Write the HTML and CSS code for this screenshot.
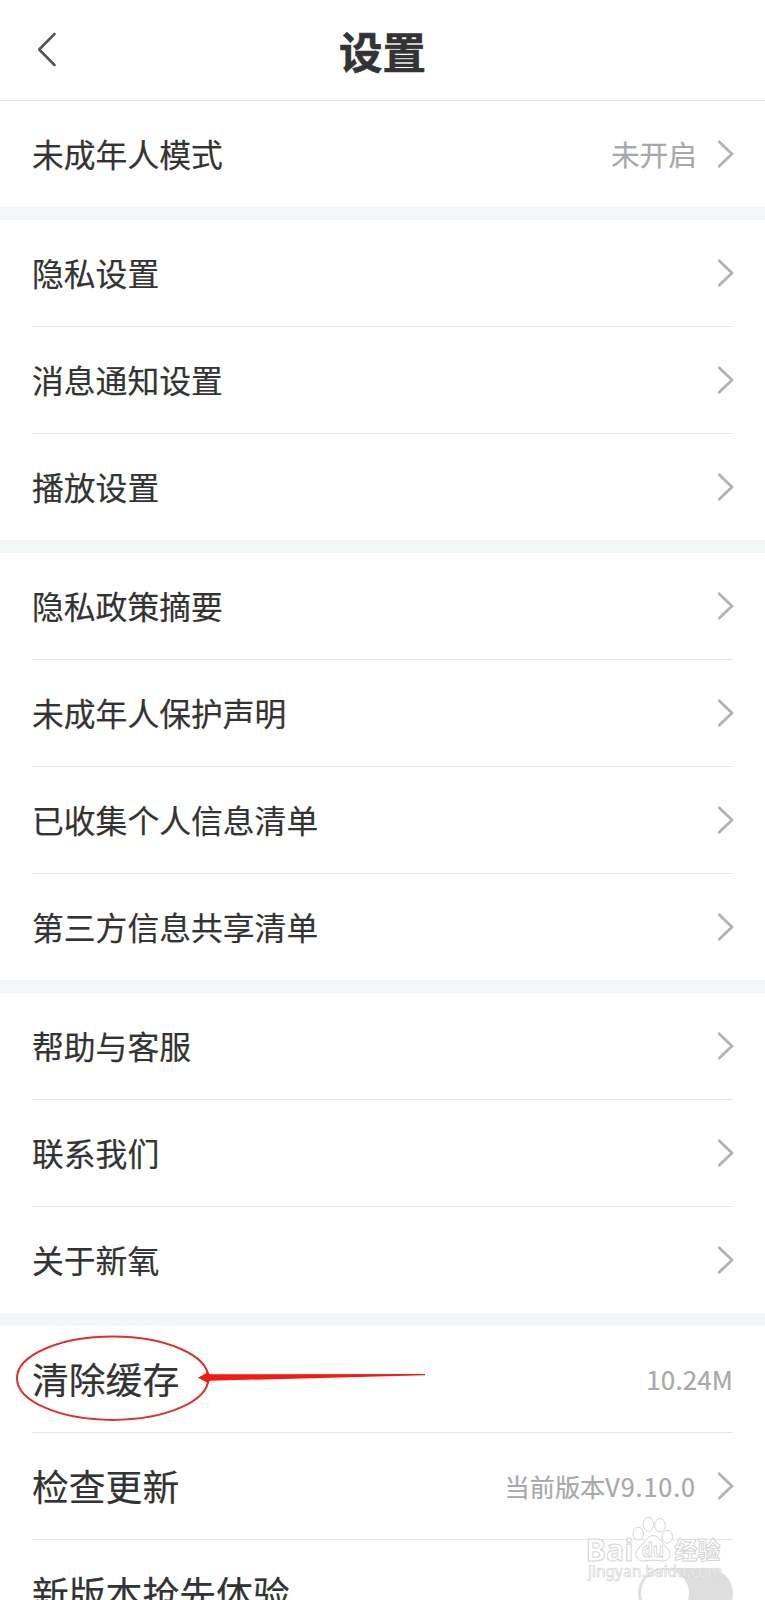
FILE: index.html
```html
<!DOCTYPE html>
<html lang="zh-CN">
<head>
<meta charset="utf-8">
<title>设置</title>
<link rel="stylesheet" href="styles.css">
</head>
<body>
<svg class="defs" width="0" height="0"><symbol id="chev" viewBox="0 0 18 30"><path d="M3.200 2.700 L16 15 L3.200 27.300"/></symbol></svg>
<main class="screen">
  <header class="header">
    <svg class="back" viewBox="0 0 20 36"><path d="M17.5 2 L2.2 17.5 L17.5 33"/></svg>
    <h1 class="title">设置</h1>
  </header>
  <section class="group">
    <div class="row"><span class="label">未成年人模式</span><span class="value">未开启</span><svg class="chev"><use href="#chev"/></svg></div>
  </section>
  <section class="group">
    <div class="row"><span class="label">隐私设置</span><svg class="chev"><use href="#chev"/></svg></div>
    <div class="row"><span class="label">消息通知设置</span><svg class="chev"><use href="#chev"/></svg></div>
    <div class="row"><span class="label">播放设置</span><svg class="chev"><use href="#chev"/></svg></div>
  </section>
  <section class="group">
    <div class="row"><span class="label">隐私政策摘要</span><svg class="chev"><use href="#chev"/></svg></div>
    <div class="row"><span class="label">未成年人保护声明</span><svg class="chev"><use href="#chev"/></svg></div>
    <div class="row"><span class="label">已收集个人信息清单</span><svg class="chev"><use href="#chev"/></svg></div>
    <div class="row"><span class="label">第三方信息共享清单</span><svg class="chev"><use href="#chev"/></svg></div>
  </section>
  <section class="group">
    <div class="row"><span class="label">帮助与客服</span><svg class="chev"><use href="#chev"/></svg></div>
    <div class="row"><span class="label">联系我们</span><svg class="chev"><use href="#chev"/></svg></div>
    <div class="row"><span class="label">关于新氧</span><svg class="chev"><use href="#chev"/></svg></div>
  </section>
  <section class="group large">
    <div class="row"><span class="label">清除缓存</span><span class="value size">10.24M</span></div>
    <div class="row"><span class="label">检查更新</span><span class="value version">当前版本<span class="num">V9.10.0</span></span><svg class="chev"><use href="#chev"/></svg></div>
    <div class="row"><span class="label">新版本抢先体验</span><span class="switch"></span></div>
  </section>
  <svg class="callout" viewBox="0 0 430 90">
    <ellipse cx="112.7" cy="43.2" rx="95.7" ry="41.7"/>
    <path d="M198 42.7 L208 37 L210 39.300 L425 39 L425 40.300 L210 45.8 L208 48 Z"/>
  </svg>
  <svg class="watermark" viewBox="0 0 155 74">
    <text class="brand" x="14.500" y="50.500" textLength="48" lengthAdjust="spacingAndGlyphs">Bai</text>
    <ellipse cx="67.3" cy="23.7" rx="5.2" ry="6.5"/>
    <ellipse cx="77.3" cy="14.3" rx="5.2" ry="7"/>
    <ellipse cx="89" cy="15.3" rx="5.3" ry="6.7"/>
    <ellipse cx="96.300" cy="26.700" rx="5.200" ry="6.500"/>
    <path d="M82 25.500 C75 26 73 34 68 38 C62 43 65 51.500 73 51 C79 50 85 50 91 51 C99 51.500 102 43 96 38 C91 34 89 26 82 25.500 Z"/>
    <text class="du" x="71" y="46.500" textLength="22" lengthAdjust="spacingAndGlyphs">du</text>
    <text class="exp" x="103.500" y="48.500" textLength="46" lengthAdjust="spacingAndGlyphs">经验</text>
    <text class="url" x="17" y="66.500" textLength="134" lengthAdjust="spacingAndGlyphs">jingyan.baidu.com</text>
  </svg>
</main>
</body>
</html>
```
FILE: styles.css
```css
* { box-sizing: border-box; }
body { margin: 0; background: #fff; overflow: hidden; }
.defs { position: absolute; }
.screen {
  position: relative;
  width: 765px;
  height: 1600px;
  overflow: hidden;
  background: #f3f6f7;
  color: #333;
  font-family: "Noto Sans CJK SC", sans-serif;
}
.header {
  display: grid;
  grid-template-columns: 100px 1fr 100px;
  align-items: center;
  height: 101px;
  background: #fff;
  border-bottom: 1px solid #e2e3e5;
}
.back { width: 20px; height: 36px; margin-left: 37px; fill: none; stroke: #555; stroke-width: 2.6; stroke-linecap: round; stroke-linejoin: round; }
.title { margin: 0; padding-top: 1px; text-align: center; font-size: 43.500px; line-height: 60px; font-weight: 700; -webkit-text-stroke: 0.6px #333; }
.group { padding: 0 32px; background: #fff; margin-bottom: 13px; }
.row {
  display: flex;
  align-items: center;
  height: 107px;
  border-bottom: 1px solid #e5e6e8;
}
.row:last-child { height: 106px; border-bottom: 0; }
.label { flex: 1; font-size: 31.8px; line-height: 46px; padding-bottom: 3px; white-space: nowrap; -webkit-text-stroke: 0.2px #333; }
.large .label { font-size: 36.800px; line-height: 54px; padding-bottom: 2px; }
.value { color: #a7a8ab; font-size: 28.700px; line-height: 42px; padding-bottom: 1px; -webkit-text-stroke: 0.2px #a7a8ab; }
.size { font-size: 26px; letter-spacing: 0.1px; }
.version { font-size: 25.200px; margin-right: 1px; }
.num { letter-spacing: 0.9px; }
.chev { width: 18px; height: 30px; margin-left: 19px; margin-right: -1px; fill: none; stroke: #b1b2b4; stroke-width: 2.8; stroke-linecap: round; stroke-linejoin: round; }
.switch { width: 95px; height: 51px; border-radius: 26px; background: #dedede; }
.switch::before { content: ""; display: block; width: 48px; height: 46px; margin: 2.500px; border-radius: 24px; background: #fff; }
.callout { position: absolute; left: 0; top: 1335px; width: 430px; height: 90px; }
.callout ellipse { fill: none; stroke: #dc3228; stroke-width: 2; }
.callout path { fill: #f5190f; }
.watermark { position: absolute; left: 571px; top: 1510px; width: 155px; height: 74px; overflow: visible; fill: #fff; stroke: #d5d5d5; stroke-width: 1; }
.brand { font: 700 31px "Open Sans", sans-serif; }
.du { font: 700 20px "Open Sans", sans-serif; }
.exp { font: 700 24px "Noto Sans CJK SC", sans-serif; }
.url { font: 400 16px "Noto Sans", sans-serif; stroke-width: 0.700; }
```
